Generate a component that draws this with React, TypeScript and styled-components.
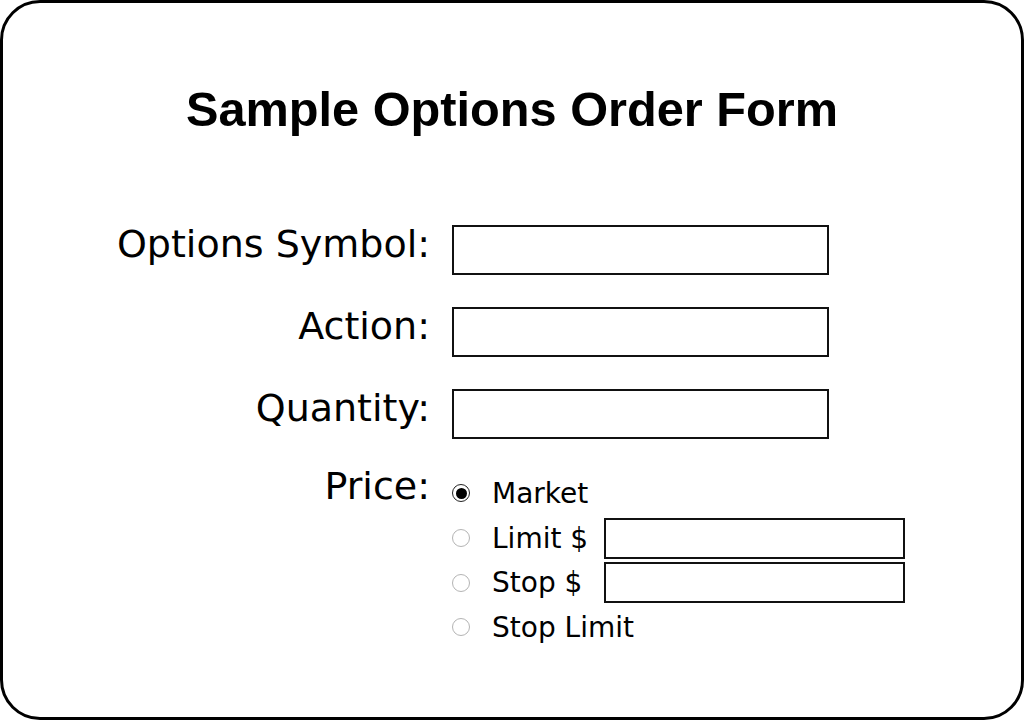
import React, { useState } from "react"
import styled, { createGlobalStyle } from "styled-components"

const GlobalStyle = createGlobalStyle`
  html, body {
    margin: 0;
    padding: 0;
    background: #fff;
  }
`

const Frame = styled.div`
  box-sizing: border-box;
  width: 1024px;
  height: 720px;
  border: 3px solid #000;
  border-radius: 40px;
  background: #fff;
  padding-top: 78px;
`

const Title = styled.h1`
  margin: 0;
  text-align: center;
  font-family: "Liberation Sans", Arial, sans-serif;
  font-weight: bold;
  font-size: 48.7px;
  line-height: 56px;
  color: #000;
`

const Form = styled.form`
  display: grid;
  grid-template-columns: 427px 1fr;
  column-gap: 22px;
  row-gap: 32px;
  margin-top: 88px;
`

const Label = styled.label<{ $shift?: number }>`
  justify-self: end;
  align-self: start;
  margin-top: ${(p) => p.$shift ?? 0}px;
  font-family: "DejaVu Sans", Verdana, sans-serif;
  font-size: 38px;
  line-height: 38px;
  color: #000;
`

const TextBox = styled.input<{ $w: number; $h: number }>`
  box-sizing: border-box;
  width: ${(p) => p.$w}px;
  height: ${(p) => p.$h}px;
  border: 2px solid #111;
  border-radius: 0;
  padding: 0 8px;
  margin: 0;
  background: #fff;
  font-family: "DejaVu Sans", Verdana, sans-serif;
  font-size: 20px;
  outline: none;
`

const Options = styled.div`
  display: flex;
  flex-direction: column;
`

const OptionRow = styled.div`
  display: flex;
  align-items: center;
  height: 44.7px;
`

const Radio = styled.span<{ $on: boolean }>`
  box-sizing: border-box;
  width: 18px;
  height: 18px;
  border-radius: 50%;
  border: 1px solid ${(p) => (p.$on ? "#222" : "#b4b4b4")};
  display: flex;
  align-items: center;
  justify-content: center;
  cursor: pointer;
  flex: none;

  &::after {
    content: "";
    width: 11px;
    height: 11px;
    border-radius: 50%;
    background: #000;
    display: ${(p) => (p.$on ? "block" : "none")};
  }
`

const OptionText = styled.span<{ $w?: number }>`
  margin-left: 22px;
  width: ${(p) => (p.$w ? `${p.$w}px` : "auto")};
  flex: none;
  white-space: nowrap;
  font-family: "DejaVu Sans", Verdana, sans-serif;
  font-size: 28px;
  color: #000;
  cursor: pointer;
`

const priceTypes = [
  { key: "market", label: "Market", field: false },
  { key: "limit", label: "Limit $", field: true },
  { key: "stop", label: "Stop $", field: true },
  { key: "stopLimit", label: "Stop Limit", field: false },
]

const App: React.FC = () => {
  const [priceType, setPriceType] = useState("market")

  return (
    <Frame>
      <GlobalStyle />
      <Title>Sample Options Order Form</Title>
      <Form onSubmit={(e) => e.preventDefault()}>
        <Label>Options Symbol:</Label>
        <TextBox $w={377} $h={50} />
        <Label>Action:</Label>
        <TextBox $w={377} $h={50} />
        <Label>Quantity:</Label>
        <TextBox $w={377} $h={50} />
        <Label $shift={-4}>Price:</Label>
        <Options>
          {priceTypes.map((t) => (
            <OptionRow key={t.key}>
              <Radio $on={priceType === t.key} onClick={() => setPriceType(t.key)} />
              <OptionText $w={t.field ? 112 : undefined} onClick={() => setPriceType(t.key)}>
                {t.label}
              </OptionText>
              {t.field ? <TextBox $w={301} $h={41} /> : null}
            </OptionRow>
          ))}
        </Options>
      </Form>
    </Frame>
  )
}

export default App
